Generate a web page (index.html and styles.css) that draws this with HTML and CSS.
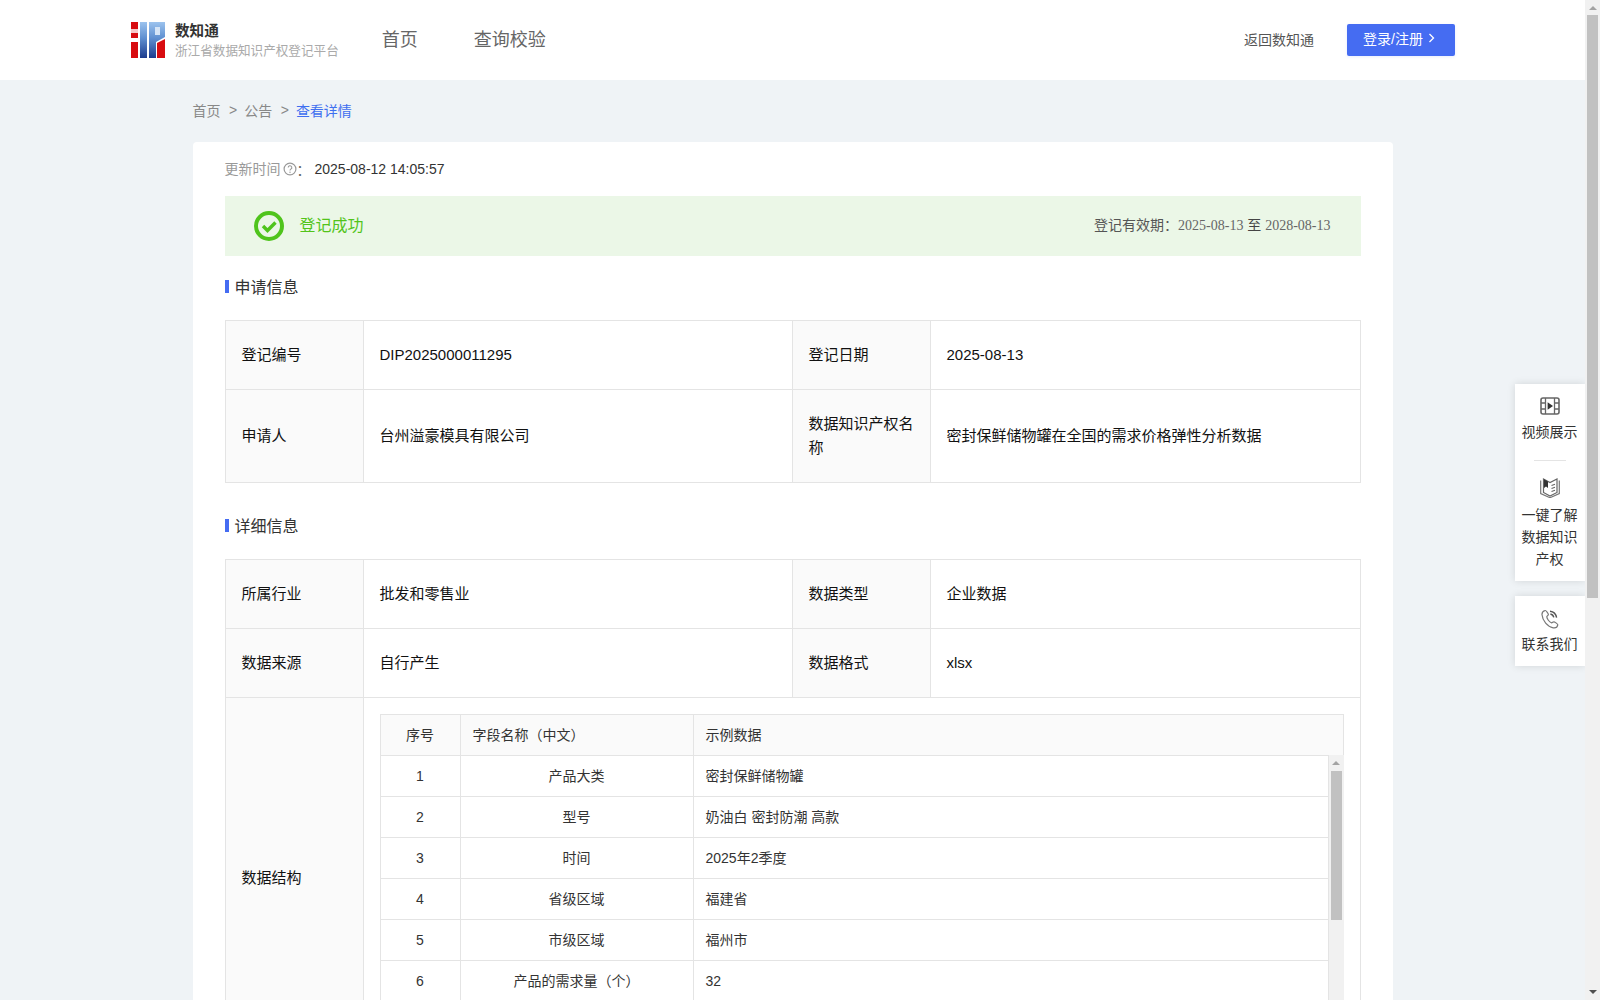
FILE: index.html
```html
<!DOCTYPE html>
<html lang="zh-CN">
<head>
<meta charset="utf-8">
<title>查看详情</title>
<link rel="stylesheet" href="styles.css">
</head>
<body>
<div class="viewport">
  <header class="topbar">
    <div class="brand">
      <svg class="logo" viewBox="0 0 34 36" width="34" height="36">
        <defs>
          <linearGradient id="lg" x1="0" y1="0" x2="0" y2="1">
            <stop offset="0" stop-color="#9cc3ee"/>
            <stop offset="0.45" stop-color="#5f8fd0"/>
            <stop offset="1" stop-color="#1d3c8e"/>
          </linearGradient>
        </defs>
        <rect x="0" y="0" width="7" height="7" fill="#d80c10"/>
        <rect x="0" y="7" width="7" height="4" fill="#f6c9c9"/>
        <rect x="0" y="11" width="7" height="5" fill="#d80c10"/>
        <rect x="0" y="20" width="7" height="16" fill="#d80c10"/>
        <rect x="9" y="0" width="7" height="36" fill="url(#lg)"/>
        <path d="M18 0H34V15L25 20V36H18Z" fill="url(#lg)"/>
        <rect x="24" y="5" width="5" height="8" fill="#d6e5f7"/>
        <path d="M26 21L34 17V36H26Z" fill="#d80c10"/>
      </svg>
      <div class="brand-text">
        <div class="brand-name">数知通</div>
        <div class="brand-sub">浙江省数据知识产权登记平台</div>
      </div>
    </div>
    <nav class="nav">
      <a class="nav-item">首页</a>
      <a class="nav-item">查询校验</a>
    </nav>
    <div class="top-right">
      <a class="back-link">返回数知通</a>
      <a class="login-btn">登录/注册
        <svg class="chev" viewBox="0 0 7 10" width="7" height="10"><path d="M1.5 1L5.5 5L1.5 9" fill="none" stroke="#fff" stroke-width="1.3"/></svg>
      </a>
    </div>
  </header>

  <main class="wrap">
    <div class="crumbs">
      <span class="crumb">首页</span><span class="sep">&gt;</span><span class="crumb">公告</span><span class="sep">&gt;</span><span class="crumb-cur">查看详情</span>
    </div>
    <section class="card">
      <div class="update">
        <span class="update-label">更新时间</span>
        <svg class="help" viewBox="0 0 14 14" width="14" height="14"><circle cx="7" cy="7" r="5.9" fill="none" stroke="#999" stroke-width="1.2"/><path d="M5.2 5.6a1.8 1.8 0 1 1 2.7 1.5c-.6.4-.9.7-.9 1.4" fill="none" stroke="#999" stroke-width="1.1"/><circle cx="7" cy="10.2" r=".7" fill="#999"/></svg>
        <span class="update-colon">：</span>
        <span class="update-time">2025-08-12 14:05:57</span>
      </div>
      <div class="banner">
        <div class="banner-left">
          <svg class="ok" viewBox="0 0 30 30" width="30" height="30"><circle cx="15" cy="15" r="13" fill="none" stroke="#4fc41c" stroke-width="4"/><path d="M9 15l4.5 4.5L21.5 11.5" fill="none" stroke="#4fc41c" stroke-width="3.4"/></svg>
          <span class="ok-text">登记成功</span>
        </div>
        <div class="valid"><span class="valid-label">登记有效期：</span><span class="valid-date">2025-08-13</span> <span class="valid-to">至</span> <span class="valid-date">2028-08-13</span></div>
      </div>

      <h3 class="sec-title">申请信息</h3>
      <table class="info">
        <colgroup><col class="c-label"><col class="c-value"><col class="c-label"><col></colgroup>
        <tr>
          <th>登记编号</th><td>DIP2025000011295</td>
          <th>登记日期</th><td>2025-08-13</td>
        </tr>
        <tr>
          <th>申请人</th><td>台州溢豪模具有限公司</td>
          <th>数据知识产权名称</th><td>密封保鲜储物罐在全国的需求价格弹性分析数据</td>
        </tr>
      </table>

      <h3 class="sec-title sec-second">详细信息</h3>
      <table class="info">
        <colgroup><col class="c-label"><col class="c-value"><col class="c-label"><col></colgroup>
        <tr>
          <th>所属行业</th><td>批发和零售业</td>
          <th>数据类型</th><td>企业数据</td>
        </tr>
        <tr>
          <th>数据来源</th><td>自行产生</td>
          <th>数据格式</th><td>xlsx</td>
        </tr>
        <tr>
          <th>数据结构</th>
          <td colspan="3" class="struct-cell">
            <div class="struct">
              <table class="fields fields-head">
                <colgroup><col class="f-no"><col class="f-name"><col></colgroup>
                <tr><th class="t-center">序号</th><th>字段名称（中文）</th><th>示例数据</th></tr>
              </table>
              <div class="struct-body">
                <table class="fields">
                  <colgroup><col class="f-no"><col class="f-name"><col></colgroup>
                  <tr><td class="t-center">1</td><td class="t-center">产品大类</td><td>密封保鲜储物罐</td></tr>
                  <tr><td class="t-center">2</td><td class="t-center">型号</td><td>奶油白 密封防潮 高款</td></tr>
                  <tr><td class="t-center">3</td><td class="t-center">时间</td><td>2025年2季度</td></tr>
                  <tr><td class="t-center">4</td><td class="t-center">省级区域</td><td>福建省</td></tr>
                  <tr><td class="t-center">5</td><td class="t-center">市级区域</td><td>福州市</td></tr>
                  <tr><td class="t-center">6</td><td class="t-center">产品的需求量（个）</td><td>32</td></tr>
                </table>
                <div class="mini-bar">
                  <span class="arrow-up arrow-mini"></span>
                  <span class="mini-thumb"></span>
                </div>
              </div>
            </div>
          </td>
        </tr>
      </table>
    </section>
  </main>

  <aside class="float">
    <div class="float-box">
      <div class="float-item">
        <svg class="f-icon" viewBox="0 0 20 18" width="20" height="18"><rect x="1" y="1" width="18" height="16" rx="2" fill="none" stroke="#666" stroke-width="1.6"/><path d="M5.5 1V17M14.5 1V17M1 6H5.5M1 12H5.5M14.5 6H19M14.5 12H19" fill="none" stroke="#666" stroke-width="1.3"/><path d="M7.6 5.2L13 9L7.6 12.8Z" fill="#333"/></svg>
        <span class="f-text">视频展示</span>
      </div>
      <div class="float-line"></div>
      <div class="float-item">
        <svg class="f-icon" viewBox="0 0 20 20" width="20" height="20"><path d="M3.5 1L10 4.5L17 1V14.5L10 18L3.5 14.5Z" fill="none" stroke="#666" stroke-width="1.2"/><path d="M.7 2.5V15.5L10 19.7L19.3 15.5V2.5" fill="none" stroke="#777" stroke-width="1.2"/><path d="M4 1.2L8 3.5V10L6 8.4L4 10Z" fill="#333"/><path d="M11.5 7.5L15 6.2M11.5 10.5L15 9.2M11.5 13.5L15 12.2" fill="none" stroke="#666" stroke-width="1.1"/></svg>
        <span class="f-text">一键了解<br>数据知识<br>产权</span>
      </div>
    </div>
    <div class="float-box float-box-2">
      <div class="float-item">
        <svg class="f-icon" viewBox="0 0 18 20" width="18" height="20"><path d="M4.2 1.5C2.2 2 .8 3.6 1 5.8C1.5 11.5 6.5 17.8 12.2 18.8C14.6 19.2 16.4 17.8 16.8 15.8C16.9 15.2 14 13 13 12.8C12 12.6 11.4 14 10.4 13.8C8.4 13.2 5.8 9.6 5.8 7.8C5.8 6.8 7.4 6.6 7.4 5.6C7.4 4.6 5 1.3 4.2 1.5Z" fill="none" stroke="#777" stroke-width="1.2"/><path d="M9 2.2C12.4 2.6 15 5.2 15.6 8.6M9.4 5C11 5.3 12.4 6.6 12.8 8.4" fill="none" stroke="#555" stroke-width="1.4"/></svg>
        <span class="f-text">联系我们</span>
      </div>
    </div>
  </aside>
</div>
<div class="page-bar">
  <span class="arrow-up arrow-page"></span>
  <span class="page-thumb"></span>
  <span class="arrow-down"></span>
</div>
</body>
</html>
```

FILE: styles.css
```css
* { box-sizing: border-box; }
html, body { margin: 0; height: 100%; }
body {
  display: flex;
  height: 1000px;
  overflow: hidden;
  background: #eff3f6;
  font-family: "Liberation Sans", "Noto Sans CJK SC", sans-serif;
  font-size: 14px;
  color: #333;
}
.viewport { position: relative; flex: 1; min-width: 0; overflow: hidden; }

/* header */
.topbar {
  display: flex;
  align-items: center;
  height: 80px;
  padding: 0 130px 0 131px;
  background: #fff;
}
.brand { display: flex; align-items: center; }
.logo { display: block; flex: none; }
.brand-text { margin-left: 10px; padding-top: 2px; }
.brand-name { font-size: 14.6px; line-height: 20px; font-weight: 700; color: #333; }
.brand-sub { font-size: 12.6px; line-height: 19px; padding-top: 1px; color: #aaa; white-space: nowrap; }
.nav { display: flex; gap: 56px; margin-left: 43px; padding-bottom: 4px; }
.nav-item { font-size: 18px; color: #666; }
.top-right { display: flex; align-items: center; margin-left: auto; }
.back-link { color: #555; margin-right: 33px; padding-bottom: 2px; }
.login-btn {
  display: flex;
  align-items: center;
  gap: 5px;
  width: 108px;
  height: 32px;
  padding: 0 0 4px 16px;
  border-radius: 2px;
  background: #456cf2;
  color: #fff;
  box-shadow: 0 1px 3px rgba(69, 108, 242, .12);
}
.chev { display: block; }

/* main */
.wrap { width: 1200px; margin: 0 auto; }
.crumbs { display: flex; align-items: center; height: 62px; padding-bottom: 3px; color: #888; }
.sep { margin: 0 7px 0 8.5px; color: #888; }
.crumb-cur { color: #3f6ff0; }
.card { padding: 16px 32px 32px; background: #fff; border-radius: 4px; }
.update { display: flex; align-items: center; height: 22px; }
.update-label { color: #999; padding-bottom: 2px; }
.help { margin-left: 2px; }
.update-colon { color: #666; margin-right: 4px; }
.update-time { color: #333; }
.banner {
  display: flex;
  align-items: center;
  justify-content: space-between;
  height: 60px;
  margin-top: 16px;
  padding: 0 30px 0 29px;
  background: #ebf7e7;
}
.banner-left { display: flex; align-items: center; }
.ok { display: block; }
.ok-text { margin-left: 16px; padding-bottom: 4px; font-size: 16px; color: #52c41a; }
.valid { padding-bottom: 4px; color: #666; }
.valid-label { color: #555; }
.valid-to { color: #444; }
.valid-date { font-family: "Liberation Serif", serif; color: #666; }
.sec-title {
  display: flex;
  align-items: center;
  height: 24px;
  margin: 18px 0 22px;
  font-size: 16px;
  font-weight: 400;
  color: #333;
}
.sec-title::before {
  content: "";
  width: 4px;
  height: 13px;
  margin-right: 6px;
  background: #456cf2;
}
.sec-second { margin-top: 30px; margin-bottom: 22px; }

/* info tables */
.info {
  width: 100%;
  table-layout: fixed;
  border-collapse: collapse;
  font-size: 15px;
  line-height: 24px;
  color: #111;
}
.c-label { width: 138px; }
.c-value { width: 429px; }
.info > tbody > tr > th,
.info > tbody > tr > td {
  padding: 22px 16px;
  border: 1px solid #e4e4e4;
  text-align: left;
  font-weight: 400;
}
.info > tbody > tr > th { background: #fafafa; }
.info > tbody > tr > td.struct-cell { padding: 16px; }

/* nested field table */
.fields {
  width: 100%;
  table-layout: fixed;
  border-collapse: collapse;
  font-size: 14px;
  line-height: 22px;
  color: #333;
}
.f-no { width: 80px; }
.f-name { width: 233px; }
.fields th, .fields td {
  height: 41px;
  padding: 0 12px;
  border: 1px solid #e4e4e4;
  font-weight: 400;
  text-align: left;
}
.fields-head th { background: #fafafa; }
.fields .t-center { text-align: center; }
.struct-body { display: flex; align-items: flex-start; height: 287px; overflow: hidden; margin-top: -1px; }
.struct-body .fields { flex: 1; min-width: 0; }
.mini-bar {
  position: relative;
  flex: none;
  width: 15px;
  height: 287px;
  background: #f1f1f1;
}
.mini-thumb {
  position: absolute;
  top: 16px;
  left: 2px;
  width: 11px;
  height: 149px;
  background: #c1c1c1;
}
.arrow-up, .arrow-down {
  position: absolute;
  left: 3px;
  width: 0;
  height: 0;
  border-left: 4px solid transparent;
  border-right: 4px solid transparent;
}
.arrow-up { border-bottom: 4px solid #a3a3a3; }
.arrow-down { border-top: 4px solid #505050; bottom: 6px; left: 4px; }
.arrow-mini { top: 6px; }

/* floating tools */
.float { position: absolute; top: 384px; right: 0; width: 70px; }
.float-box {
  height: 197px;
  padding-top: 13px;
  background: #fff;
  box-shadow: 0 0 8px rgba(0, 0, 0, .12);
}
.float-box-2 { margin-top: 15px; height: 70px; }
.float-item { display: flex; flex-direction: column; align-items: center; padding-right: 1px; }
.f-icon { display: block; }
.f-text { margin-top: 6px; line-height: 22px; text-align: center; color: #333; }
.float-box-2 .f-text { margin-top: 4px; }
.float-line { width: 32px; height: 1px; margin: 17px auto; background: #e4e4e4; }

/* page scrollbar */
.page-bar { position: relative; flex: none; width: 15px; height: 1000px; background: #f1f1f1; }
.arrow-page { top: 6px; left: 4px; }
.page-thumb {
  position: absolute;
  top: 15px;
  left: 2px;
  width: 11px;
  height: 583px;
  background: #c1c1c1;
}
```
